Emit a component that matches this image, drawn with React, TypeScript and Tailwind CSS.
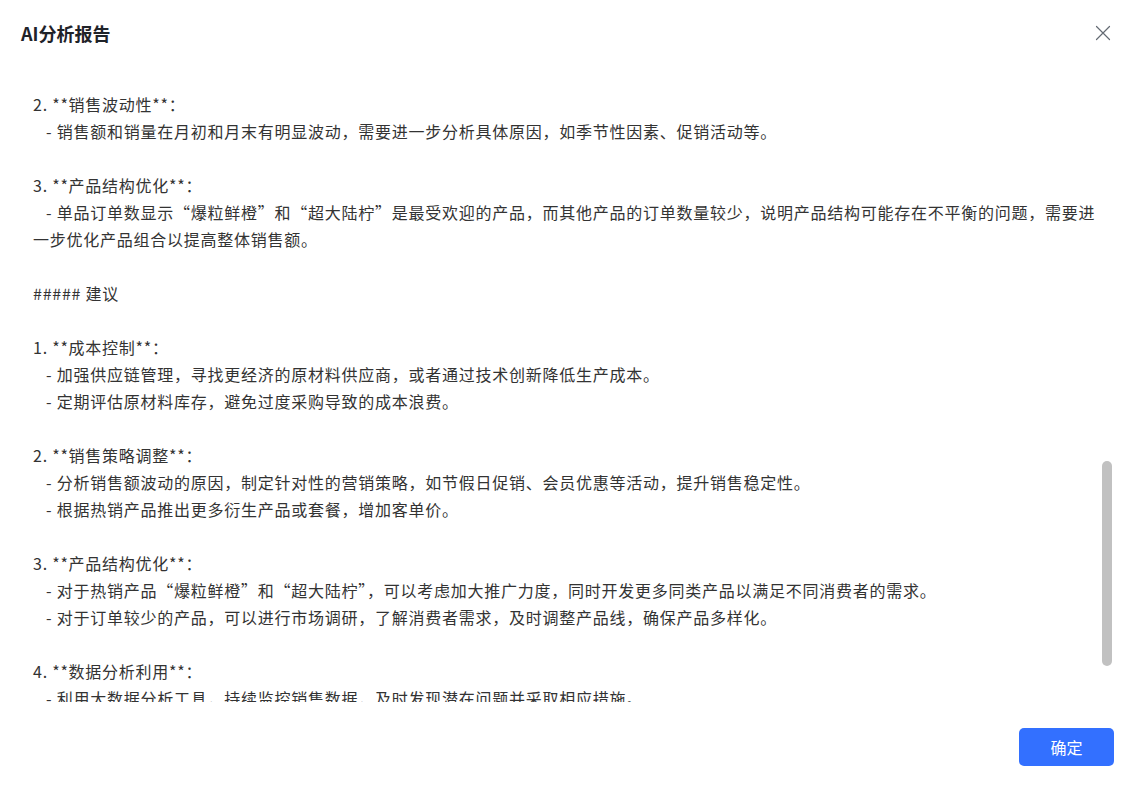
import React, { useEffect, useRef, useState } from "react";

// Report body, one entry per line ("" = blank line)
const REPORT_LINES: string[] = [
  "#### 销售数据分析报告",
  "",
  "##### 一、数据概览",
  "",
  "1. **销售额**：",
  "   - 本月总销售额为 128,560 元，较上月增长 8.6%。",
  "   - 日均销售额约为 4,147 元，最高单日销售额出现在月末。",
  "",
  "2. **销售量**：",
  "   - 本月总销售量为 3,842 件，较上月增长 5.2%。",
  "   - 销售量与销售额的变化趋势基本一致。",
  "",
  "3. **成本情况**：",
  "   - 本月总成本为 86,420 元，占销售额的 67.2%。",
  "   - 原材料成本占总成本的比例最高，约为 58%。",
  "",
  "4. **利润情况**：",
  "   - 本月毛利润为 42,140 元，毛利率为 32.8%。",
  "   - 毛利率较上月略有下降，主要受原材料价格上涨影响。",
  "   - 净利润约为 25,300 元，净利率为 19.7%。",
  "",
  "##### 二、产品分析",
  "",
  "1. **热销产品**：",
  "   - “爆粒鲜橙”本月订单数为 1,126 单，位居第一。",
  "   - “超大陆柠”本月订单数为 984 单，位居第二。",
  "",
  "2. **其他产品**：",
  "   - 其余产品订单数均低于 300 单，销售表现一般。",
  "   - 部分新品上市时间较短，市场认知度有待提升。",
  "",
  "##### 三、趋势分析",
  "",
  "1. **整体趋势**：",
  "   - 本月销售额整体呈上升趋势，中旬略有回落。",
  "   - 周末销售额明显高于工作日。",
  "",
  "2. **客单价**：",
  "   - 本月平均客单价为 33.5 元，与上月基本持平。",
  "   - 会员客户客单价高于普通客户约 12%。",
  "",
  "##### 四、问题总结",
  "",
  "1. **成本较高**：",
  "   - 成本占销售额比例较高，压缩了利润空间，需要关注原材料采购和生产环节的成本控制。",
  "",
  "2. **销售波动性**：",
  "   - 销售额和销量在月初和月末有明显波动，需要进一步分析具体原因，如季节性因素、促销活动等。",
  "",
  "3. **产品结构优化**：",
  "   - 单品订单数显示“爆粒鲜橙”和“超大陆柠”是最受欢迎的产品，而其他产品的订单数量较少，说明产品结构可能存在不平衡的问题，需要进一步优化产品组合以提高整体销售额。",
  "",
  "##### 建议",
  "",
  "1. **成本控制**：",
  "   - 加强供应链管理，寻找更经济的原材料供应商，或者通过技术创新降低生产成本。",
  "   - 定期评估原材料库存，避免过度采购导致的成本浪费。",
  "",
  "2. **销售策略调整**：",
  "   - 分析销售额波动的原因，制定针对性的营销策略，如节假日促销、会员优惠等活动，提升销售稳定性。",
  "   - 根据热销产品推出更多衍生产品或套餐，增加客单价。",
  "",
  "3. **产品结构优化**：",
  "   - 对于热销产品“爆粒鲜橙”和“超大陆柠”，可以考虑加大推广力度，同时开发更多同类产品以满足不同消费者的需求。",
  "   - 对于订单较少的产品，可以进行市场调研，了解消费者需求，及时调整产品线，确保产品多样化。",
  "",
  "4. **数据分析利用**：",
  "   - 利用大数据分析工具，持续监控销售数据，及时发现潜在问题并采取相应措施。",
  "   - 建立销售数据分析模型，预测销售趋势，为经营决策提供数据支持。",
  "",
  "通过以上措施，可以有效控制成本、稳定销售、优化产品结构，从而提升整体经营效益。",
];

// index of the line that sits at the top of the visible area
const ANCHOR_LINE = 46;

export default function App() {
  const scrollRef = useRef<HTMLDivElement>(null);
  const anchorRef = useRef<HTMLDivElement>(null);
  const [thumb, setThumb] = useState({ top: 0, height: 0 });

  useEffect(() => {
    const el = scrollRef.current;
    if (!el || !anchorRef.current) return;
    el.scrollTop = anchorRef.current.offsetTop - 25;
    const h = el.clientHeight;
    const total = el.scrollHeight;
    const height = Math.max(30, (h * h) / total);
    const top = (el.scrollTop / Math.max(1, total - h)) * (h - height);
    setThumb({ top, height });
  }, []);

  return (
    <div
      className="w-full h-[795px] bg-white flex flex-col text-[#1f2329]"
      style={{ fontFamily: '"Noto Sans CJK SC", "Noto Sans", sans-serif' }}
    >
      {/* Header */}
      <div className="h-[66px] shrink-0 flex items-center justify-between pl-[21px] pr-[23px]">
        <h1 className="text-[18px] font-semibold leading-none">AI分析报告</h1>
        <button className="w-[16px] h-[16px] flex items-center justify-center text-[#646a73]">
          <svg width="16" height="16" viewBox="0 0 16 16" fill="none" stroke="currentColor" strokeWidth="1.2" strokeLinecap="round">
            <path d="M1.5 1.5 14.5 14.5M14.5 1.5 1.5 14.5" />
          </svg>
        </button>
      </div>

      {/* Scrollable report body */}
      <div className="relative flex-1 min-h-0 ml-[20px] mr-[21px]">
        <div
          ref={scrollRef}
          className="h-full overflow-hidden pl-[13px] pr-[13px] pt-[6px] pb-[20px] text-[16px] leading-[27px] tracking-[0.75px] text-[#333]"
        >
          {REPORT_LINES.map((line, i) => (
            <div
              key={i}
              ref={i === ANCHOR_LINE ? anchorRef : undefined}
              className="whitespace-pre-wrap min-h-[27px]"
            >
              {line}
            </div>
          ))}
        </div>
        {/* scrollbar thumb */}
        <div
          className="absolute right-[1px] w-[10px] rounded-full bg-[#c1c1c1]"
          style={{ top: thumb.top, height: thumb.height }}
        />
      </div>

      {/* Footer */}
      <div className="h-[93px] shrink-0 flex justify-end items-start pt-[26px] pr-[20px]">
        <button className="w-[95px] h-[38px] rounded-[5px] bg-[#3370ff] text-white text-[16px]">
          确定
        </button>
      </div>
    </div>
  );
}
